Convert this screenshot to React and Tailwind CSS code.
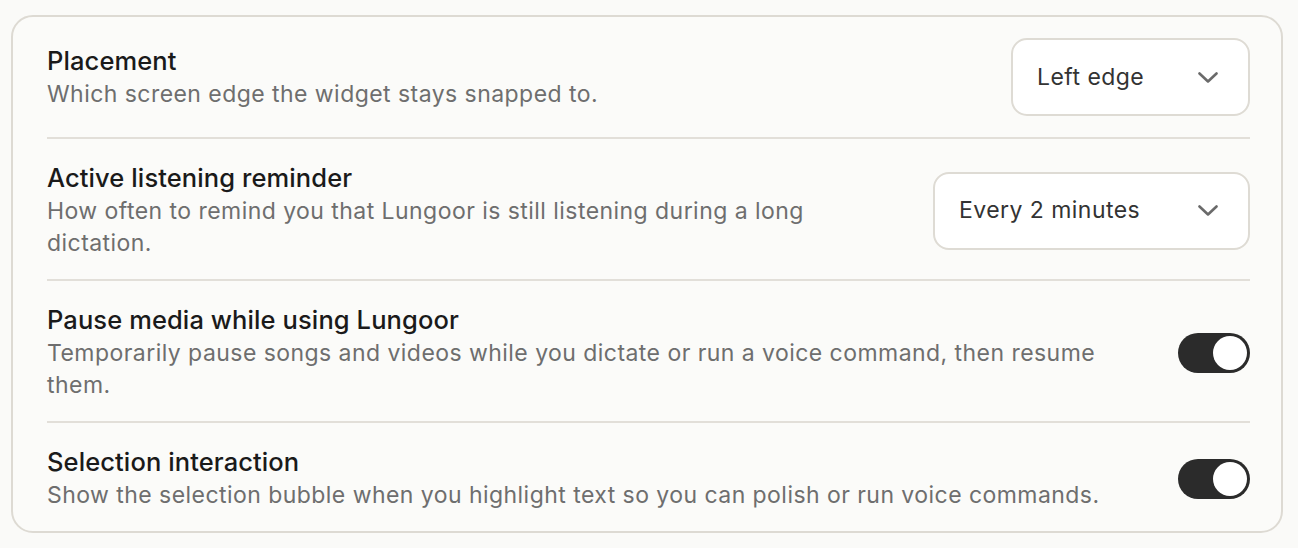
import React from "react";

function Chevron() {
  return (
    <svg width="20" height="11" viewBox="0 0 20 11" fill="none" className="shrink-0">
      <path d="M1.5 1.5 L10 9.5 L18.5 1.5" stroke="#6a6a6a" strokeWidth="2.6" strokeLinecap="round" strokeLinejoin="round" />
    </svg>
  );
}

function Select({ value, width }) {
  return (
    <div
      className={`flex h-[78px] shrink-0 items-center justify-between rounded-[16px] border-2 border-[#dedbd4] bg-white pl-[24px] pr-[30px] ${width}`}
    >
      <span className="text-[23px] tracking-[0.45px] text-[#333333]">{value}</span>
      <Chevron />
    </div>
  );
}

function Toggle() {
  return (
    <div className="flex h-[40px] w-[72px] shrink-0 items-center justify-end rounded-full bg-[#2b2b2b] p-[3px]">
      <div className="h-[34px] w-[34px] rounded-full bg-white" />
    </div>
  );
}

function Row({ title, desc, control, last, first }) {
  return (
    <div
      className={`flex items-center justify-between gap-[40px] ${first ? "pt-[21px] pb-[21px]" : "pt-[23px] pb-[20px]"} ${last ? "" : "border-b-2 border-[#e2dfd9]"}`}
    >
      <div className="min-w-0 flex-1">
        <div className="text-[25.5px] font-medium leading-[32px] tracking-[0.1px] text-[#1a1a1a]">{title}</div>
        <div className="mt-[1px] text-[23px] leading-[32px] tracking-[0.45px] text-[#6e6e6e]">{desc}</div>
      </div>
      {control}
    </div>
  );
}

export default function App() {
  return (
    <div
      className="min-h-[548px] w-full bg-[#fafaf8] pl-[11px] pt-[15px]"
      style={{ fontFamily: "Inter, 'Noto Sans', sans-serif" }}
    >
      <div className="w-[1272px] rounded-[22px] border-2 border-[#dddad3] bg-[#fbfbf9] pl-[34px] pr-[31px]">
        <Row
          first
          title="Placement"
          desc="Which screen edge the widget stays snapped to."
          control={<Select value="Left edge" width="w-[239px]" />}
        />
        <Row
          title="Active listening reminder"
          desc="How often to remind you that Lungoor is still listening during a long dictation."
          control={<Select value="Every 2 minutes" width="w-[317px]" />}
        />
        <Row
          title="Pause media while using Lungoor"
          desc="Temporarily pause songs and videos while you dictate or run a voice command, then resume them."
          control={<Toggle />}
        />
        <Row
          title="Selection interaction"
          desc="Show the selection bubble when you highlight text so you can polish or run voice commands."
          control={<Toggle />}
          last
        />
      </div>
    </div>
  );
}
